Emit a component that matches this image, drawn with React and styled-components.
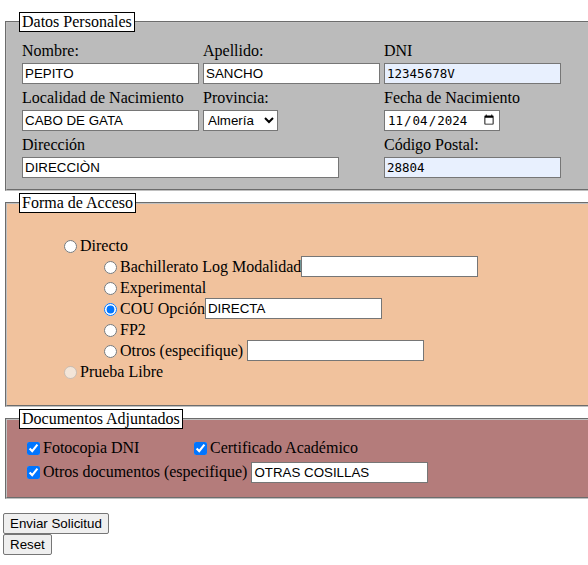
import React from "react"
import styled, { createGlobalStyle } from "styled-components"

const GlobalStyle = createGlobalStyle`
    html, body {
        margin: 0;
    }
    body {
        overflow-x: hidden;
        background: #fff;
        color: #000;
        font-family: "Liberation Serif", "Times New Roman", serif;
        font-size: 16px;
    }
`

const App = () => {
    return (
        <>
            <GlobalStyle />
            <Form onSubmit={e => e.preventDefault()}>
                <Fieldset $bg="#bbbbbb" $pad="9px 12px 11px">
                    <Legend>Datos Personales</Legend>
                    <PersonalGrid>
                        <Field>
                            <Label>Nombre:</Label>
                            <TextInput defaultValue="PEPITO" />
                        </Field>
                        <Field>
                            <Label>Apellido:</Label>
                            <TextInput defaultValue="SANCHO" />
                        </Field>
                        <Field>
                            <Label>DNI</Label>
                            <TextInput defaultValue="12345678V" $auto />
                        </Field>
                        <Field>
                            <Label>Localidad de Nacimiento</Label>
                            <TextInput defaultValue="CABO DE GATA" />
                        </Field>
                        <Field>
                            <Label>Provincia:</Label>
                            <Select defaultValue="almeria">
                                <option value="almeria">Almería</option>
                                <option value="cadiz">Cádiz</option>
                                <option value="granada">Granada</option>
                            </Select>
                        </Field>
                        <Field>
                            <Label>Fecha de Nacimiento</Label>
                            <DateInput type="date" defaultValue="2024-11-04" />
                        </Field>
                        <Field $span={2}>
                            <Label>Dirección</Label>
                            <TextInput defaultValue="DIRECCIÒN" $w={317} />
                        </Field>
                        <Field>
                            <Label>Código Postal:</Label>
                            <TextInput defaultValue="28804" $auto />
                        </Field>
                    </PersonalGrid>
                </Fieldset>

                <Fieldset $bg="#f1c29d">
                    <Legend>Forma de Acceso</Legend>
                    <OptionList>
                        <li>
                            <Row><Radio name="acceso" />Directo</Row>
                            <OptionList $nested>
                                <li>
                                    <Row><Radio name="directo" />Bachillerato Log Modalidad<TextInput /></Row>
                                </li>
                                <li>
                                    <Row><Radio name="directo" />Experimental</Row>
                                </li>
                                <li>
                                    <Row><Radio name="directo" defaultChecked />COU Opción<TextInput defaultValue="DIRECTA" /></Row>
                                </li>
                                <li>
                                    <Row><Radio name="directo" />FP2</Row>
                                </li>
                                <li>
                                    <Row><Radio name="directo" />Otros (especifique)<Gap /><TextInput /></Row>
                                </li>
                            </OptionList>
                        </li>
                        <li>
                            <Row><Radio name="acceso" disabled />Prueba Libre</Row>
                        </li>
                    </OptionList>
                </Fieldset>

                <Fieldset $bg="#b47c7b" $pad="4px 12px 14px">
                    <Legend>Documentos Adjuntados</Legend>
                    <DocsGrid>
                        <Check>
                            <Checkbox defaultChecked />Fotocopia DNI
                        </Check>
                        <Check>
                            <Checkbox defaultChecked />Certificado Académico
                        </Check>
                        <Check $wide>
                            <Checkbox defaultChecked />Otros documentos (especifique)<Gap /><TextInput defaultValue="OTRAS COSILLAS" />
                        </Check>
                    </DocsGrid>
                </Fieldset>

                <Buttons>
                    <Button type="submit">Enviar Solicitud</Button>
                    <Button type="reset">Reset</Button>
                </Buttons>
            </Form>
        </>
    )
}

const Form = styled.form`
    padding: 12px 0 8px 3px;
`

const Fieldset = styled.fieldset`
    width: 100%;
    margin: 0 2px 2px;
    padding: ${props => props.$pad || "6px 12px 10px"};
    border: 2px groove #c0c0c0;
    background: ${props => props.$bg};
`

const Legend = styled.legend`
    padding: 0 2px;
    border: 1px solid #000;
    background: #fff;
    line-height: 18px;
`

const PersonalGrid = styled.div`
    display: grid;
    grid-template-columns: repeat(3, 177px);
    column-gap: 4px;
    row-gap: 4px;
    padding: 0 3px;
`

const Field = styled.div`
    display: flex;
    flex-direction: column;
    align-items: flex-start;
    grid-column: ${props => props.$span ? `span ${props.$span}` : "auto"};
`

const Label = styled.label`
    margin-bottom: 3px;
    line-height: 19px;
`

const TextInput = styled.input`
    box-sizing: border-box;
    width: ${props => props.$w || 177}px;
    height: 21px;
    margin: 0;
    padding: 1px 2px;
    border: 1px solid #767676;
    border-radius: 0;
    background: ${props => props.$auto ? "#e8f0fe" : "#fff"};
    color: #000;
    font-family: ${props => props.$auto ? `"DejaVu Sans Mono", monospace` : `"Liberation Sans", Arial, sans-serif`};
    font-size: ${props => props.$auto ? "12.5px" : "13.33px"};
    vertical-align: middle;
`

const Select = styled.select`
    box-sizing: border-box;
    width: 75px;
    height: 21px;
    margin: 0;
    border: 1px solid #767676;
    border-radius: 0;
    background: #fff;
    color: #000;
    font-family: "Liberation Sans", Arial, sans-serif;
    font-size: 13.33px;
`

const DateInput = styled.input`
    box-sizing: border-box;
    width: 116px;
    height: 21px;
    margin: 0;
    padding: 1px 2px;
    border: 1px solid #767676;
    border-radius: 0;
    background: #fff;
    color: #000;
    font-family: "DejaVu Sans Mono", monospace;
    font-size: 12.5px;
`

const OptionList = styled.ul`
    list-style: none;
    margin: ${props => props.$nested ? "0" : "16px 0 13px"};
    padding-left: 40px;
`

const Row = styled.div`
    display: flex;
    align-items: center;
    height: 21px;
    white-space: nowrap;
`

const Gap = styled.span`
    display: inline-block;
    width: 4px;
`

const Radio = styled.input.attrs({ type: "radio" })`
    flex: none;
    margin: 1px 3px 0 5px;
`

const DocsGrid = styled.div`
    display: grid;
    grid-template-columns: 167px auto;
    row-gap: 2px;
    padding: 4px 0 0 4px;
`

const Check = styled.label`
    display: flex;
    align-items: center;
    grid-column: ${props => props.$wide ? "1 / span 2" : "auto"};
    height: 22px;
    white-space: nowrap;
`

const Checkbox = styled.input.attrs({ type: "checkbox" })`
    flex: none;
    margin: 0 3px 0 4px;
`

const Buttons = styled.div`
    display: flex;
    flex-direction: column;
    align-items: flex-start;
    margin-top: 14px;
`

const Button = styled.button`
    box-sizing: border-box;
    height: 21px;
    padding: 1px 6px;
    border: 1px solid #767676;
    border-radius: 2px;
    background: #efefef;
    color: #000;
    font-family: "Liberation Sans", Arial, sans-serif;
    font-size: 13.33px;
`

export default App
